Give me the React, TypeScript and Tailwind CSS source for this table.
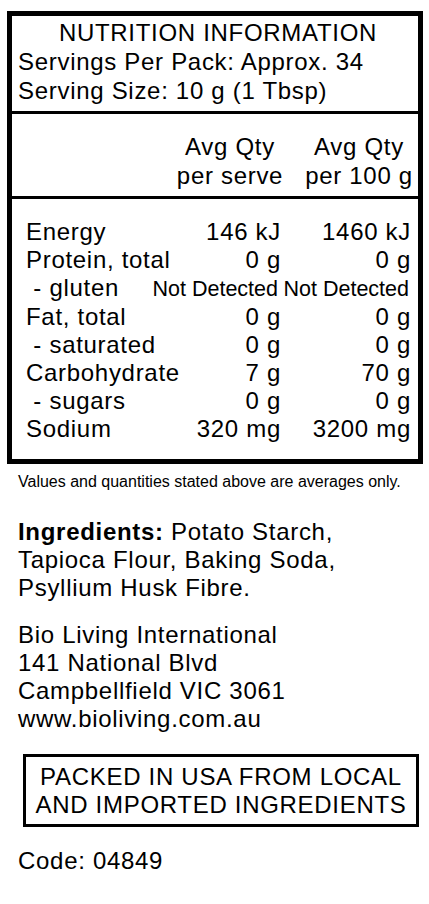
const rows: { label: string; serve: string; per100: string; small?: boolean }[] = [
  { label: "Energy", serve: "146 kJ", per100: "1460 kJ" },
  { label: "Protein, total", serve: "0 g", per100: "0 g" },
  { label: "\u00a0- gluten", serve: "Not Detected", per100: "Not Detected", small: true },
  { label: "Fat, total", serve: "0 g", per100: "0 g" },
  { label: "\u00a0- saturated", serve: "0 g", per100: "0 g" },
  { label: "Carbohydrate", serve: "7 g", per100: "70 g" },
  { label: "\u00a0- sugars", serve: "0 g", per100: "0 g" },
  { label: "Sodium", serve: "320 mg", per100: "3200 mg" },
];

const NutritionPanel = () => {
  return (
    <div className="w-[416px] border-[5px] border-black">
      <div className="border-b-[3px] border-black pl-[6px] pt-[2px] pb-[6px] leading-[29px]">
        <p className="text-center">NUTRITION INFORMATION</p>
        <p>Servings Per Pack: Approx. 34</p>
        <p>Serving Size: 10 g (1 Tbsp)</p>
      </div>

      <div className="flex justify-end border-b-[3px] border-black pt-[18px] pb-[6px] leading-[29px]">
        <div className="w-[140px] text-center">
          <p>Avg Qty</p>
          <p>per serve</p>
        </div>
        <div className="w-[118px] text-center">
          <p>Avg Qty</p>
          <p>per 100 g</p>
        </div>
      </div>

      <div className="pl-[14px] pr-[7px] pt-[19px] pb-[16px] leading-[28px]">
        {rows.map((row) => (
          <div key={row.label} className="flex items-baseline">
            <span className="min-w-0 flex-1 whitespace-nowrap">{row.label}</span>
            <span
              className={
                row.small
                  ? "w-[132px] shrink-0 whitespace-nowrap pr-[3px] text-right text-[21.5px] tracking-[0px]"
                  : "w-[132px] shrink-0 whitespace-nowrap text-right"
              }
            >
              {row.serve}
            </span>
            <span
              className={
                row.small
                  ? "w-[130px] shrink-0 whitespace-nowrap pr-[2px] text-right text-[21.5px] tracking-[0px]"
                  : "w-[130px] shrink-0 whitespace-nowrap text-right"
              }
            >
              {row.per100}
            </span>
          </div>
        ))}
      </div>
    </div>
  );
};

export default function App() {
  return (
    <div className="min-h-[904px] w-[429px] bg-white pt-[11px] pb-[20px] pl-[7px] font-['Liberation_Sans',Arial,sans-serif] text-[24px] tracking-[0.7px] text-black">
      <NutritionPanel />

      <p className="mt-[8px] pl-[11px] text-[16px] leading-[20px] tracking-[0px]">
        Values and quantities stated above are averages only.
      </p>

      <p className="mt-[26px] pl-[11px] leading-[28px]">
        <span className="font-bold">Ingredients:</span> Potato Starch,
        <br />
        Tapioca Flour, Baking Soda,
        <br />
        Psyllium Husk Fibre.
      </p>

      <div className="mt-[19px] pl-[11px] leading-[28px]">
        <p>Bio Living International</p>
        <p>141 National Blvd</p>
        <p>Campbellfield VIC 3061</p>
        <p>www.bioliving.com.au</p>
      </div>

      <div className="mt-[21px] ml-[16px] w-[396px] border-[3px] border-black pt-[6px] pb-[5px] text-center leading-[28px]">
        <p>PACKED IN USA FROM LOCAL</p>
        <p>AND IMPORTED INGREDIENTS</p>
      </div>

      <p className="mt-[20px] pl-[11px] leading-[28px]">Code: 04849</p>
    </div>
  );
}
